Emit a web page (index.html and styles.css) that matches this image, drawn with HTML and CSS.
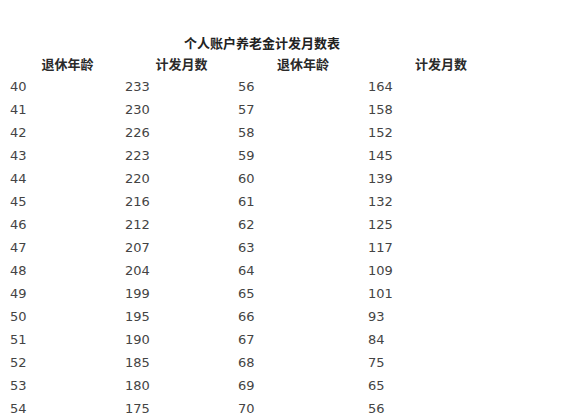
FILE: index.html
```html
<!DOCTYPE html>
<html lang="zh">
<head>
<meta charset="utf-8">
<title>个人账户养老金计发月数表</title>
<link rel="stylesheet" href="styles.css">
</head>
<body>
<div class="sheet">
  <div class="title">个人账户养老金计发月数表</div>
  <div class="grid">
    <div class="hd">退休年龄</div><div class="hd">计发月数</div><div class="hd">退休年龄</div><div class="hd">计发月数</div>
    <div>40</div><div>233</div><div>56</div><div>164</div>
    <div>41</div><div>230</div><div>57</div><div>158</div>
    <div>42</div><div>226</div><div>58</div><div>152</div>
    <div>43</div><div>223</div><div>59</div><div>145</div>
    <div>44</div><div>220</div><div>60</div><div>139</div>
    <div>45</div><div>216</div><div>61</div><div>132</div>
    <div>46</div><div>212</div><div>62</div><div>125</div>
    <div>47</div><div>207</div><div>63</div><div>117</div>
    <div>48</div><div>204</div><div>64</div><div>109</div>
    <div>49</div><div>199</div><div>65</div><div>101</div>
    <div>50</div><div>195</div><div>66</div><div>93</div>
    <div>51</div><div>190</div><div>67</div><div>84</div>
    <div>52</div><div>185</div><div>68</div><div>75</div>
    <div>53</div><div>180</div><div>69</div><div>65</div>
    <div>54</div><div>175</div><div>70</div><div>56</div>
  </div>
</div>
</body>
</html>
```

FILE: styles.css
```css
html, body {
  margin: 0;
  padding: 0;
  background: #ffffff;
}
.sheet {
  padding: 34px 0 0 10px;
  width: 504px;
}
.title {
  font-family: "Noto Sans CJK SC", sans-serif;
  font-weight: bold;
  font-size: 13px;
  line-height: 18px;
  color: #222222;
  text-align: center;
}
.grid {
  display: grid;
  grid-template-columns: 115px 113px 130px 146px;
  grid-auto-rows: 23px;
  font-family: "DejaVu Sans", Verdana, sans-serif;
  font-size: 13px;
  line-height: 23px;
  color: #444444;
}
.grid .hd {
  font-family: "Noto Sans CJK SC", sans-serif;
  font-weight: bold;
  color: #2a2a2a;
  text-align: center;
}
```
